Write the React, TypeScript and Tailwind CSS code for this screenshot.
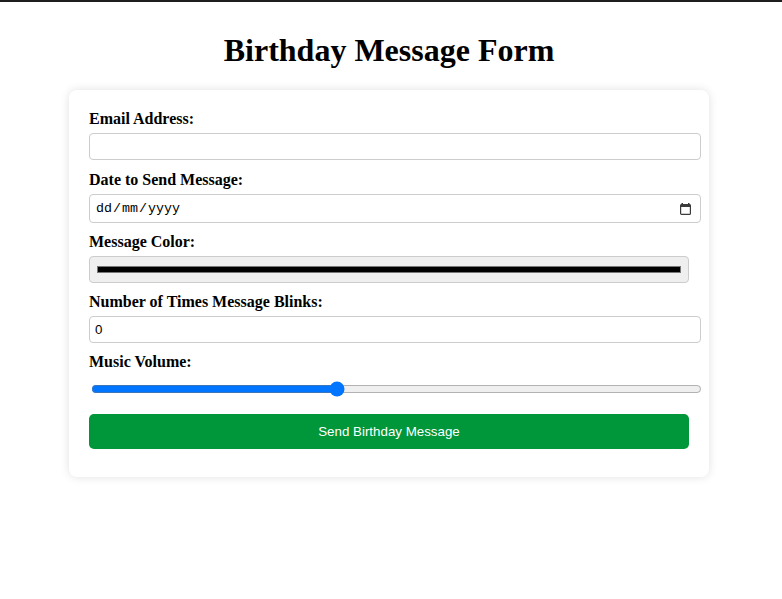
import React, { useState } from "react";

function CalendarIcon() {
  return (
    <svg width="11" height="12" viewBox="0 0 11 12" className="text-[#3b3b3b]">
      <rect x="1.5" y="0" width="1.5" height="2.5" fill="currentColor" />
      <rect x="8" y="0" width="1.5" height="2.5" fill="currentColor" />
      <rect x="0.6" y="1.6" width="9.8" height="9.8" rx="1" fill="none" stroke="currentColor" strokeWidth="1.2" />
      <rect x="0.6" y="1.6" width="9.8" height="2.4" fill="currentColor" />
    </svg>
  );
}

export default function App() {
  const [email, setEmail] = useState("");
  const [color, setColor] = useState("#000000");
  const [blinks, setBlinks] = useState("0");
  const [volume, setVolume] = useState(40);

  const label = "block mb-[5px] text-[16px] font-bold leading-[18px] text-black";
  const field =
    "box-content block w-full h-[15px] p-[5px] border border-[#cccccc] rounded-[4px] bg-white text-[13.33px] leading-[15px] text-black font-['Liberation_Sans',Arial,sans-serif]";

  return (
    <div className="min-h-[599px] bg-white font-['Liberation_Serif','Times_New_Roman',serif]">
      <div className="h-[2px] bg-[#1e1e1e]" />
      <div className="pr-[4px]">
        <h1 className="mt-[30px] mb-[21px] text-center text-[32px] font-bold leading-[37px] text-black">
          Birthday Message Form
        </h1>

        <form
          className="mx-auto w-[640px] rounded-[8px] bg-white px-[20px] pt-[20px] pb-[28px] shadow-[0_0_10px_rgba(0,0,0,0.12)]"
          onSubmit={(e) => e.preventDefault()}
        >
          <label className={label} htmlFor="email">
            Email Address:
          </label>
          <input
            id="email"
            type="email"
            value={email}
            onChange={(e) => setEmail(e.target.value)}
            className={`${field} mb-[11px]`}
          />

          <label className={label} htmlFor="date">
            Date to Send Message:
          </label>
          <div
            id="date"
            className="mb-[10px] flex h-[29px] w-[612px] items-center justify-between rounded-[4px] border border-[#cccccc] bg-white pl-[6px] pr-[9px] text-[13.33px] text-black font-['Liberation_Mono','Courier_New',monospace]"
          >
            <span className="flex items-center">
              <span>dd</span>
              <span className="px-[1px]">/</span>
              <span>mm</span>
              <span className="px-[1px]">/</span>
              <span>yyyy</span>
            </span>
            <CalendarIcon />
          </div>

          <label className={label} htmlFor="color">
            Message Color:
          </label>
          <input
            id="color"
            type="color"
            value={color}
            onChange={(e) => setColor(e.target.value)}
            className="block w-full h-[27px] p-[5px] mb-[10px] border border-[#cccccc] rounded-[4px] bg-[#efefef]"
          />

          <label className={label} htmlFor="blinks">
            Number of Times Message Blinks:
          </label>
          <input
            id="blinks"
            type="number"
            value={blinks}
            onChange={(e) => setBlinks(e.target.value)}
            className={`${field} mb-[10px]`}
          />

          <label className={label} htmlFor="volume">
            Music Volume:
          </label>
          <input
            id="volume"
            type="range"
            min={0}
            max={100}
            value={volume}
            onChange={(e) => setVolume(Number(e.target.value))}
            className="box-content block w-[611px] ml-[2px] py-[5px] mb-[12px]"
          />

          <button
            type="submit"
            className="block w-full h-[35px] rounded-[5px] bg-[#00963a] text-[13.33px] text-white font-['Liberation_Sans',Arial,sans-serif]"
          >
            Send Birthday Message
          </button>
        </form>
      </div>
    </div>
  );
}
